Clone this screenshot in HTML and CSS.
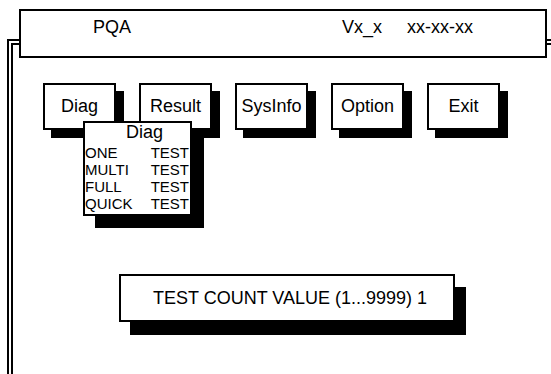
FILE: index.html
```html
<!DOCTYPE html>
<html lang="en">
<head>
    <meta charset="UTF-8">
    <meta name="viewport" content="width=device-width, initial-scale=1.0">
    <title>PQA</title>
    <link rel="stylesheet" href="styles.css">
</head>
<body>
    <div class="frame">
        <div class="title-bar">
            <span class="app-name">PQA</span>
            <span class="version">Vx_x</span>
            <span class="build-date">xx-xx-xx</span>
        </div>

        <div class="menu-bar">
            <div class="menu-item menu-open">Diag
                <div class="dropdown">
                    <div class="dropdown-title">Diag</div>
                    <div class="dropdown-row"><span>ONE</span><span>TEST</span></div>
                    <div class="dropdown-row"><span>MULTI</span><span>TEST</span></div>
                    <div class="dropdown-row"><span>FULL</span><span>TEST</span></div>
                    <div class="dropdown-row"><span>QUICK</span><span>TEST</span></div>
                </div>
            </div>
            <div class="menu-item">Result</div>
            <div class="menu-item">SysInfo</div>
            <div class="menu-item">Option</div>
            <div class="menu-item">Exit</div>
        </div>

        <div class="prompt">TEST COUNT VALUE (1...9999) 1</div>
    </div>
</body>
</html>
```

FILE: styles.css
```css
body {
    font-family: "Liberation Sans", Arial, sans-serif;
    background-color: #fff;
    color: #000;
    margin: 0;
    overflow: hidden;
    height: 374px;
}

/* outer double-line window, cut off at the right and bottom edges */
.frame {
    margin: 39px 0 0 7px;
    width: 544px;
    height: 335px;
    border: 6px double #000;
    border-right: none;
    border-bottom: none;
    box-sizing: border-box;
}

.title-bar {
    position: relative;
    display: flex;
    margin: -36px 0 0 6px;
    width: 528px;
    height: 49px;
    padding-top: 6px;
    border: 2px solid #000;
    background: #fff;
    box-sizing: border-box;
    font-size: 18px;
}

.app-name {
    margin-left: 72px;
}

.version {
    margin-left: 211px;
}

.build-date {
    margin-left: 25px;
}

.menu-bar {
    display: flex;
    gap: 23px;
    margin-top: 25px;
    padding-left: 30px;
}

.menu-item {
    display: flex;
    align-items: center;
    justify-content: center;
    width: 73px;
    height: 47px;
    border: 2px solid #000;
    background: #fff;
    box-sizing: border-box;
    box-shadow: 8px 8px 0 #000;
    font-size: 18px;
}

.menu-open {
    position: relative;
    z-index: 2;
}

.dropdown {
    position: absolute;
    left: 38px;
    top: 36px;
    width: 109px;
    height: 95px;
    padding: 0 1px 0 0;
    border: 2px solid #000;
    background: #fff;
    box-sizing: border-box;
    box-shadow: 12px 12px 0 #000;
}

.dropdown-title {
    font-size: 18px;
    line-height: 18px;
    margin-bottom: 3px;
    padding-left: 15px;
    text-align: center;
}

.dropdown-row {
    display: flex;
    justify-content: space-between;
    font-size: 15px;
    line-height: 17px;
}

.prompt {
    display: flex;
    align-items: center;
    margin: 144px 0 0 106px;
    width: 336px;
    height: 48px;
    padding-left: 32px;
    border: 2px solid #000;
    background: #fff;
    box-sizing: border-box;
    box-shadow: 11px 13px 0 #000;
    font-size: 18px;
}
```
